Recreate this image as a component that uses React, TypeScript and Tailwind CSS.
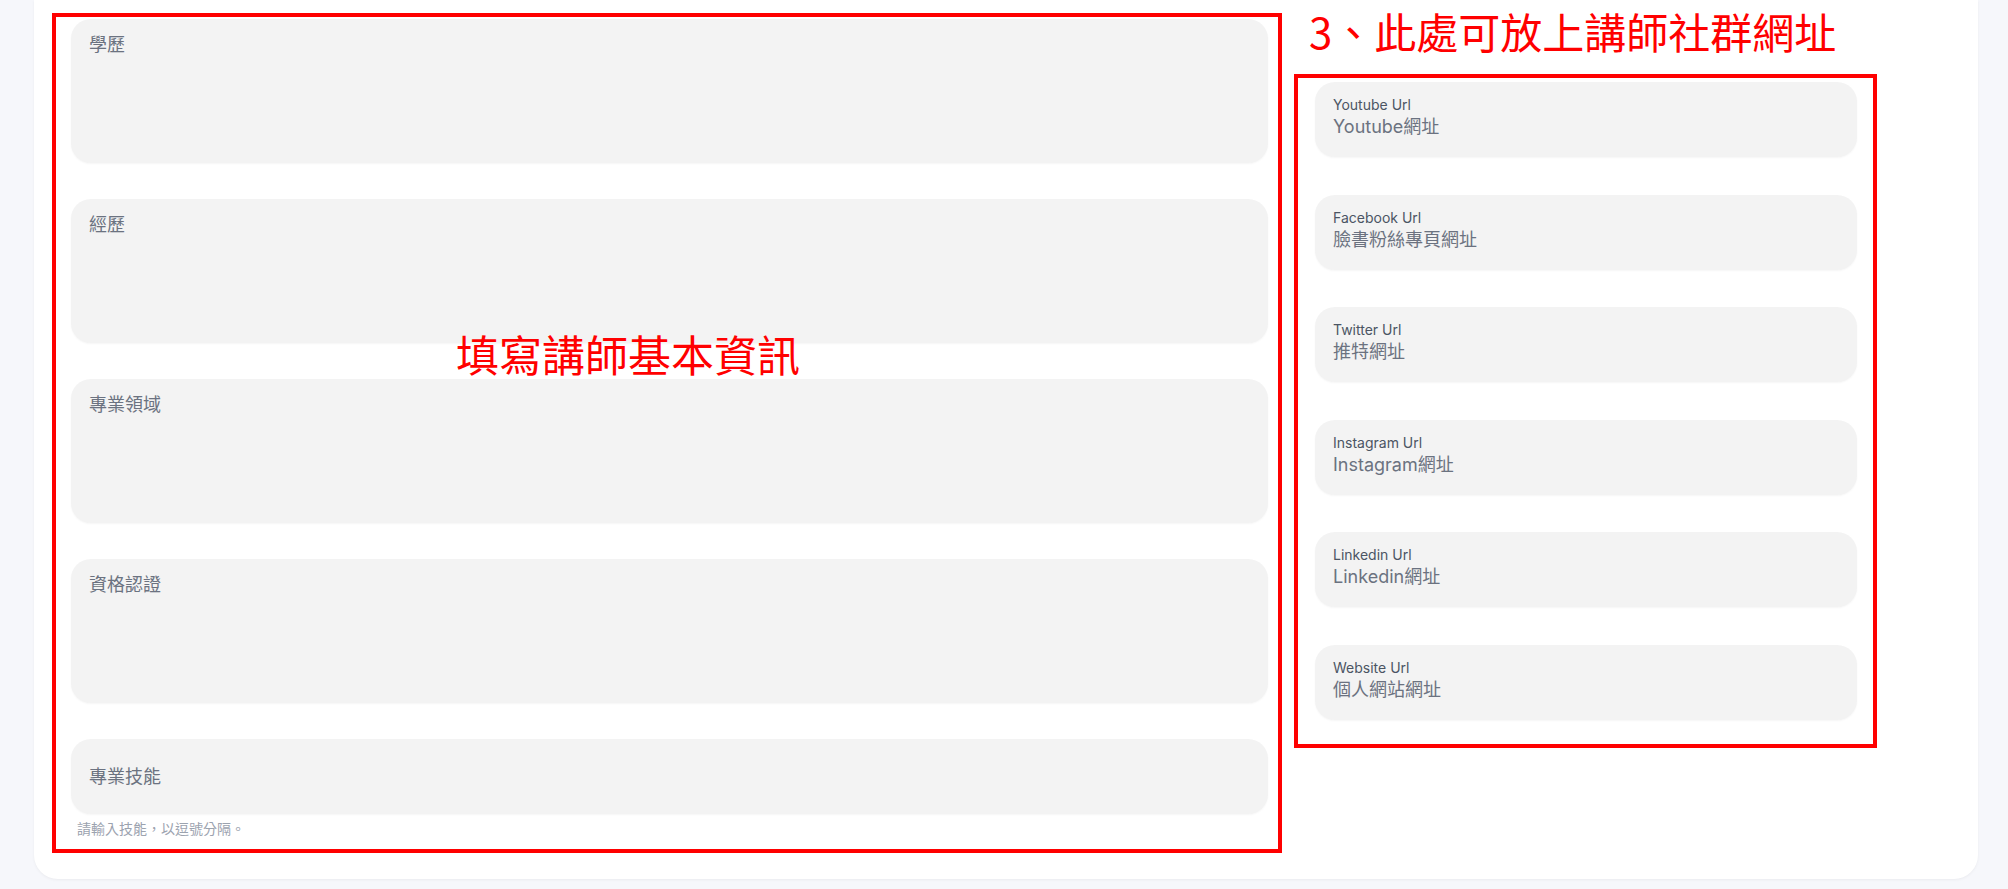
import React from 'react';

const cjk = "font-['Inter','Noto_Sans_CJK_TC',sans-serif]";

const infoFields = ["學歷", "經歷", "專業領域", "資格認證"];

const socialFields = [
  { label: "Youtube Url", value: "Youtube網址" },
  { label: "Facebook Url", value: "臉書粉絲專頁網址" },
  { label: "Twitter Url", value: "推特網址" },
  { label: "Instagram Url", value: "Instagram網址" },
  { label: "Linkedin Url", value: "Linkedin網址" },
  { label: "Website Url", value: "個人網站網址" },
];

const App: React.FC = () => {
  return (
    <div className={`min-h-screen w-[2008px] bg-[#f6f7fb] ${cjk}`}>
      <div className="ml-[34px] flex h-[879px] w-[1944px] items-start gap-[12px] rounded-b-[24px] bg-white pl-[18px] shadow-[0_1px_3px_rgba(0,0,0,0.05)]">
        {/* basic info */}
        <div className="relative mt-[13px] h-[840px] w-[1230px] border-4 border-[#ff0000] pl-[15px] pr-[10px] pt-[2px]">
          <div className="flex flex-col gap-[36px]">
            {infoFields.map((f) => (
              <div
                key={f}
                className="h-[144px] w-[1197px] rounded-[20px] bg-[#f3f3f3] pl-[18px] pt-[12px] text-[18px] leading-[28px] text-[#6b7280] shadow-[0_1px_2px_rgba(0,0,0,0.04)]"
              >
                {f}
              </div>
            ))}
            <div className="flex h-[75px] w-[1197px] items-center rounded-[20px] bg-[#f3f3f3] pl-[18px] text-[18px] text-[#6b7280] shadow-[0_1px_2px_rgba(0,0,0,0.04)]">
              專業技能
            </div>
          </div>
          <div className="ml-[6px] mt-[5px] text-[14px] leading-[20px] text-[#9ca3af]">
            請輸入技能，以逗號分隔。
          </div>
          <div className="absolute left-[400px] top-[315px] font-['Noto_Sans_CJK_TC',sans-serif] text-[43px] leading-none text-[#ff0000]">
            填寫講師基本資訊
          </div>
        </div>

        {/* social links */}
        <div className="flex flex-col">
          <div className="mb-[22px] pl-[15px] pt-[10px] font-['Noto_Sans_CJK_TC',sans-serif] text-[42px] leading-none text-[#ff0000]">
            3、此處可放上講師社群網址
          </div>
          <div className="flex h-[674px] w-[583px] flex-col gap-[37.5px] border-4 border-[#ff0000] pl-[17px] pr-[16px] pt-[4px]">
            {socialFields.map((f) => (
              <div
                key={f.label}
                className="h-[75px] w-[542px] rounded-[20px] bg-[#f3f3f3] pl-[18px] pt-[13px] shadow-[0_1px_2px_rgba(0,0,0,0.04)]"
              >
                <div className="text-[14px] leading-[20px] text-[#4b5563]">{f.label}</div>
                <div className="text-[18px] leading-[24px] text-[#6b7280]">{f.value}</div>
              </div>
            ))}
          </div>
        </div>
      </div>
    </div>
  );
};

export default App;
